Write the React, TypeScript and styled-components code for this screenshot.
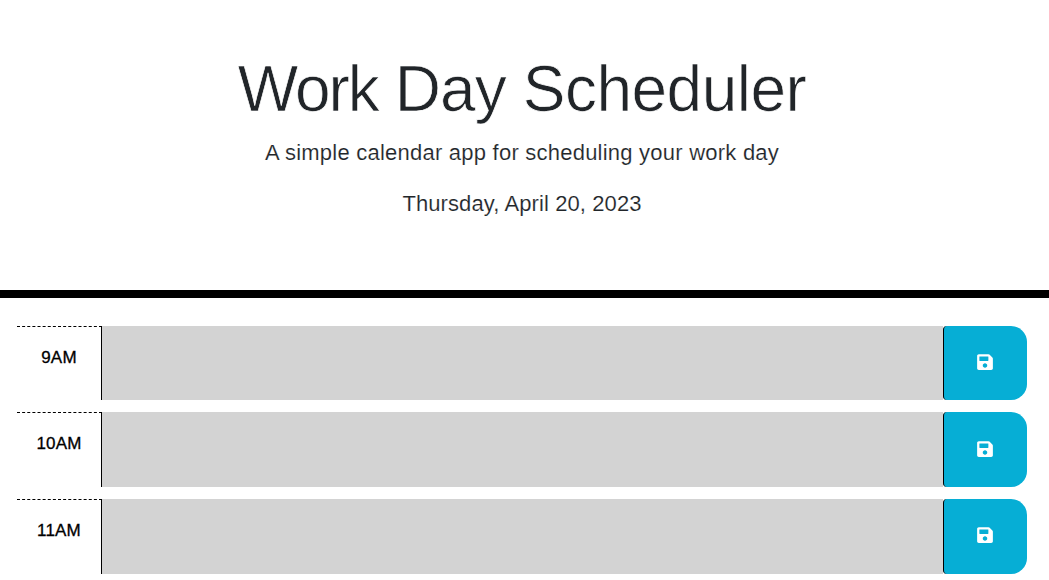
import React from "react";
import styled, { createGlobalStyle } from "styled-components";
import { FaSave } from "react-icons/fa";

const GlobalStyle = createGlobalStyle`
  *, *::before, *::after { box-sizing: border-box; }
  body {
    margin: 0;
    background: #fff;
    color: #212529;
    font-family: "Liberation Sans", Arial, sans-serif;
    overflow: hidden;
  }
`;

const Header = styled.header`
  height: 298px;
  padding: 51px 24px 0 19px;
  border-bottom: 8px solid #000;
  text-align: center;
  white-space: nowrap;
`;

const Title = styled.h1`
  margin: 0 0 8px;
  font-size: 64px;
  line-height: 77px;
  font-weight: 400;
  letter-spacing: -0.9px;
  -webkit-text-stroke: 0.7px #fff;
`;

const Word = styled.span<{ $spacing: number }>`
  letter-spacing: ${(p) => p.$spacing}px;
`;

const Lead = styled.p<{ $spacing: number }>`
  margin: 0 0 18px;
  font-size: 22px;
  line-height: 33px;
  letter-spacing: ${(p) => p.$spacing}px;
  -webkit-text-stroke: 0.15px #fff;
`;

const Schedule = styled.main`
  display: flex;
  flex-direction: column;
  gap: 11.95px;
  padding: 27.85px 22px 0 17px;
`;

const TimeBlock = styled.section`
  display: grid;
  grid-template-columns: 85px 1fr 84px;
  height: 74.6px;
`;

const Hour = styled.div`
  padding-top: 19px;
  border-top: 1px dashed #000;
  border-right: 1px solid #000;
  color: #000;
  font-size: 17px;
  line-height: 24px;
  letter-spacing: 0.2px;
  text-align: center;
  -webkit-text-stroke: 0.3px #000;
`;

const Description = styled.textarea`
  display: block;
  width: 100%;
  height: 100%;
  padding: 8px;
  border: 0;
  outline: 0;
  resize: none;
  background: #d3d3d3;
  font: inherit;
`;

const SaveButton = styled.button`
  display: flex;
  align-items: center;
  justify-content: center;
  padding: 0 2px 2px 0;
  border: 0;
  border-left: 1px solid #000;
  border-radius: 4px 16px 16px 4px;
  background: #06aed5;
  color: #fff;
  font-size: 18px;
`;

const hours = ["9AM", "10AM", "11AM"];

export default function App() {
  return (
    <>
      <GlobalStyle />
      <Header>
        <Title>
          <Word $spacing={-2}>Work</Word> <Word $spacing={-0.9}>Day</Word>{" "}
          <Word $spacing={-0.5}>Scheduler</Word>
        </Title>
        <Lead $spacing={0.23}>A simple calendar app for scheduling your work day</Lead>
        <Lead $spacing={0.1}>Thursday, April 20, 2023</Lead>
      </Header>
      <Schedule>
        {hours.map((hour) => (
          <TimeBlock key={hour}>
            <Hour>{hour}</Hour>
            <Description aria-label={`${hour} description`} />
            <SaveButton aria-label="save">
              <FaSave />
            </SaveButton>
          </TimeBlock>
        ))}
      </Schedule>
    </>
  );
}
